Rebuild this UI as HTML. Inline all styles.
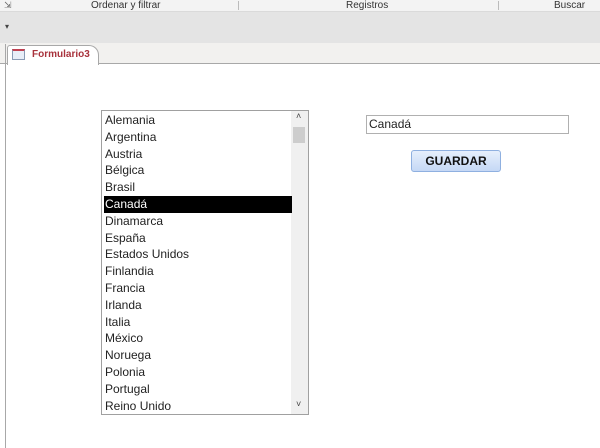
<!DOCTYPE html>
<html><head><meta charset="utf-8"><style>
*{margin:0;padding:0;box-sizing:border-box}
body{width:600px;height:448px;overflow:hidden;background:#fff;font-family:"Liberation Sans",sans-serif;position:relative}
.a{position:absolute}
.top{left:0;top:0;width:600px;height:12px;background:#f3f3f3;border-bottom:1px solid #dadada;font-size:10px;color:#333}
.band{left:0;top:12px;width:600px;height:31px;background:#e4e4e4}
.strip{left:0;top:43px;width:600px;height:21px;background:#f2f1ef;border-bottom:1px solid #a8a8a8}
.list{left:101px;top:110px;width:208px;height:305px;border:1px solid #a0a0a0;background:#fff}
.it{position:absolute;left:2px;width:188px;height:16.8px;font-size:12px;color:#222;line-height:16.8px;padding-left:1px}
.sel{background:#000;color:#fff}
</style></head><body>
<div class="a top">
<span class="a" style="left:4px;top:0;font-size:9px;color:#666">⇲</span>
<span class="a" style="left:91px;top:0">Ordenar y filtrar</span>
<div class="a" style="left:238px;top:1px;width:1px;height:9px;background:#bbb"></div>
<span class="a" style="left:346px;top:0">Registros</span>
<div class="a" style="left:498px;top:1px;width:1px;height:9px;background:#bbb"></div>
<span class="a" style="left:554px;top:0">Buscar</span>
</div>
<div class="a band"><span class="a" style="left:5px;top:10px;font-size:8px;color:#444">▾</span></div>
<div class="a strip"></div>
<div class="a" style="left:5px;top:44px;width:1px;height:404px;background:#a8a8a8"></div>
<div class="a" style="left:7px;top:45px;width:92px;height:20px;background:#fff;border:1px solid #a8a8a8;border-bottom:none;border-radius:3px 10px 0 0"></div>
<div class="a" style="left:12px;top:49px;width:13px;height:11px;border:1px solid #8a9bb5;background:#e8eef8;border-top:2px solid #c04050"></div>
<span class="a" style="left:32px;top:49px;font-size:10px;font-weight:bold;color:#a8323c">Formulario3</span>
<div class="a list">
<div class="a" style="left:189px;top:0;width:17px;height:303px;background:#f0f0f0"></div>
<span class="a" style="left:194px;top:0;font-size:9px;color:#444">˄</span>
<div class="a" style="left:191px;top:16px;width:12px;height:16px;background:#cdcdcd"></div>
<span class="a" style="left:194px;top:288px;font-size:9px;color:#444">˅</span>
<div class="it" style="top:1px">Alemania</div>
<div class="it" style="top:17.8px">Argentina</div>
<div class="it" style="top:34.6px">Austria</div>
<div class="it" style="top:51.4px">Bélgica</div>
<div class="it" style="top:68.2px">Brasil</div>
<div class="it sel" style="top:85px">Canadá</div>
<div class="it" style="top:101.8px">Dinamarca</div>
<div class="it" style="top:118.6px">España</div>
<div class="it" style="top:135.4px">Estados Unidos</div>
<div class="it" style="top:152.2px">Finlandia</div>
<div class="it" style="top:169px">Francia</div>
<div class="it" style="top:185.8px">Irlanda</div>
<div class="it" style="top:202.6px">Italia</div>
<div class="it" style="top:219.4px">México</div>
<div class="it" style="top:236.2px">Noruega</div>
<div class="it" style="top:253px">Polonia</div>
<div class="it" style="top:269.8px">Portugal</div>
<div class="it" style="top:286.6px">Reino Unido</div>
</div>
<div class="a" style="left:366px;top:115px;width:203px;height:19px;border:1px solid #b0b0b0;font-size:12px;line-height:17px;padding-left:2px;color:#222">Canadá</div>
<div class="a" style="left:411px;top:150px;width:90px;height:22px;border:1px solid #8fb0e0;border-radius:3px;background:linear-gradient(#e6effc,#c5d8f5);font-size:12px;font-weight:bold;text-align:center;line-height:20px;color:#111">GUARDAR</div>
</body></html>
